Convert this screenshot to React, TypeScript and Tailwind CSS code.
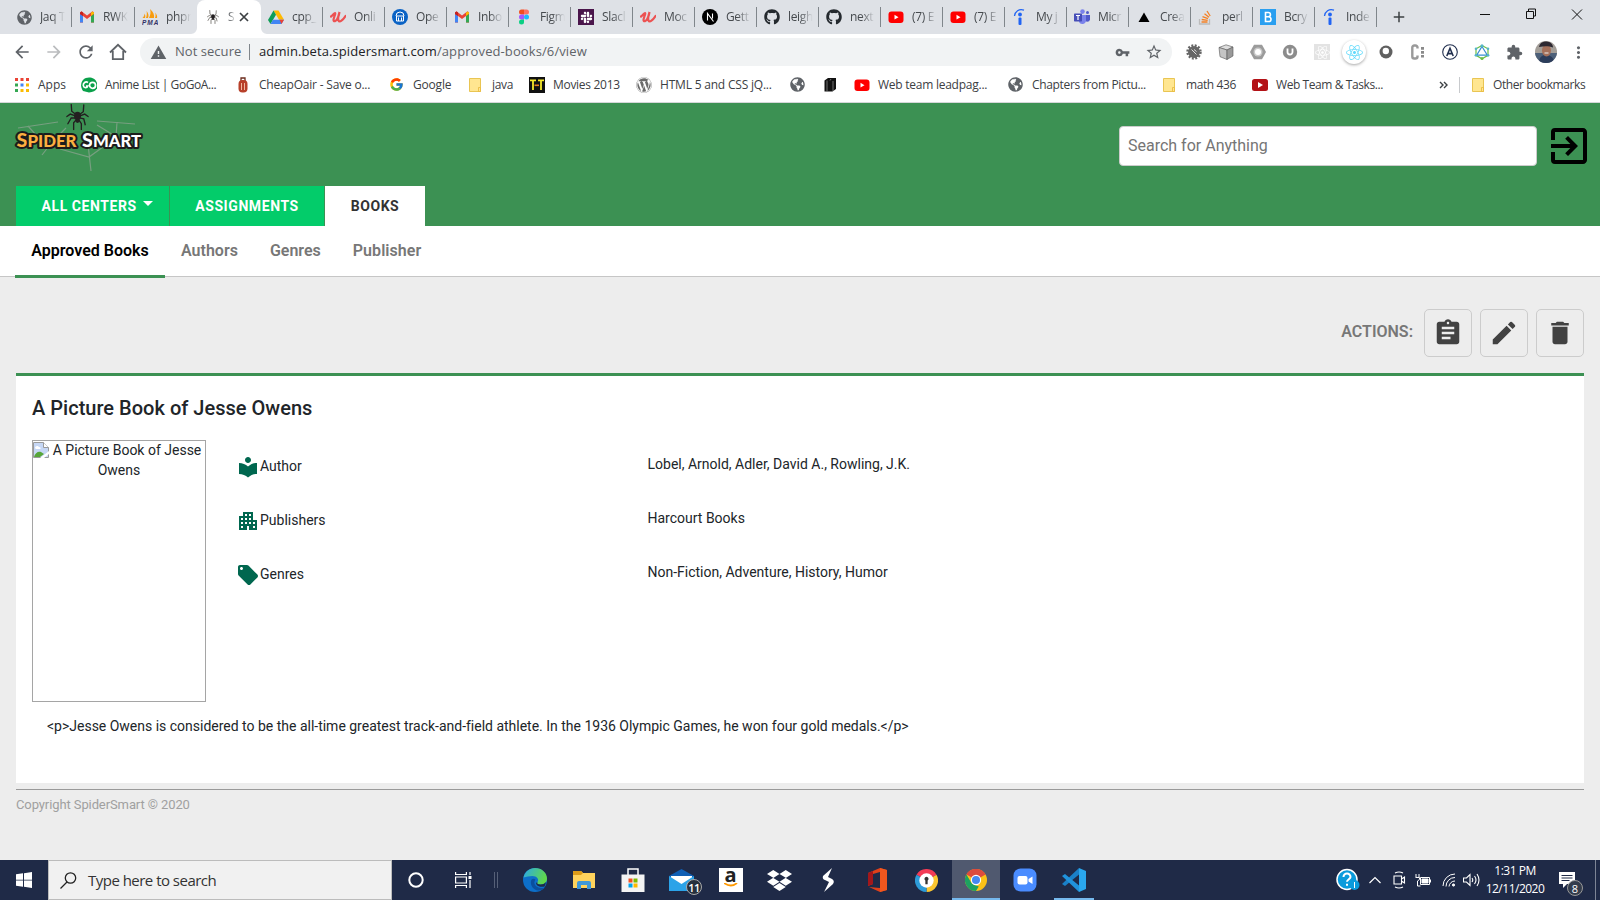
import React from "react";
import {
  MdApartment, MdArrowBack, MdArrowForward, MdAssignment, MdDelete, MdEdit, MdExitToApp, MdExtension,
  MdLocalLibrary, MdLocalOffer, MdMoreVert, MdStarBorder, MdVpnKey, MdWarning, MdRefresh, MdAdd,
} from "react-icons/md";
import { FaGithub, FaWordpress, FaDropbox, FaReact, FaGlobeAmericas, FaSlack } from "react-icons/fa";
import { FcGoogle } from "react-icons/fc";

type Kids = { children?: React.ReactNode };

const Svg = ({ children, box = "0 0 16 16", size = 16 }: Kids & { box?: string; size?: number }) => (
  <svg viewBox={box} width={size} height={size} className="shrink-0">{children}</svg>
);

const Globe = () => <FaGlobeAmericas size={15} color="#5f6368" className="shrink-0" />;
const Gmail = () => (
  <Svg>
    <path d="M1 3.5v10h3V7l4 3 4-3v6.500h3v-10L13.500 2.300 8 6.500 2.500 2.300z" fill="#ea4335" />
    <path d="M1 5v8.500h3V7z" fill="#4285f4" />
    <path d="M15 5v8.500h-3V7z" fill="#34a853" />
    <path d="M12 7l3-2.200V3.600L13.500 2.500 12 3.700z" fill="#fbbc04" />
    <path d="M1 3.500v1.500L4 7V3.600L2.500 2.500z" fill="#c5221f" />
  </Svg>
);
const Pma = () => (
  <Svg>
    <path d="M4 9c1-3 1-5 .5-7 2 2 2.500 5 1.500 7zM7 9c1.500-3 2-6 1-9 3.500 3 4.500 6 4 9zM13 9c.8-2 .8-4 0-5.500 2 2 2.500 4 2 5.500zM.5 9C2 7.500 2.500 6 2.500 4.500 3.500 6 3.500 7.500 3 9z" fill="#f89c0e" />
    <text x="0" y="15.500" fontSize="6.500" fontWeight="900" fontStyle="italic" fill="#333366" textLength="16" fontFamily="Liberation Sans">PMA</text>
  </Svg>
);
const Spider = ({ size = 14, thin = false }: { size?: number; thin?: boolean }) => (
  <Svg box="0 0 24 28" size={size}>
    <g fill="none" stroke={thin ? "#55504a" : "#231f20"} strokeWidth="1.400" strokeLinecap="round">
      <path d="M11 12L6 8 5.500 1M10.500 13L4.500 11 1 13.500M10.500 15l-5 0L2 21M11 16.500L8 20v7" />
      <path d="M13.500 12L18 8.500 18.500 1.500M14 13l5.500-2L23 13.500M14 15l4.500 1L20 22M13 16.500L16 21v6" />
    </g>
    <ellipse cx="12" cy="13" rx="3.600" ry="4.500" fill="#231f20" />
    <circle cx="12" cy="18" r="2.200" fill="#231f20" />
  </Svg>
);
const Drive = () => (
  <Svg>
    <path d="M5.500 1.500h5l5.500 9.300h-5z" fill="#ffba00" />
    <path d="M5.500 1.500L0 10.900 2.500 15 8 5.700z" fill="#0f9d58" />
    <path d="M5 10.800h11L13.500 15h-11z" fill="#4285f4" />
    <path d="M11.500 10.800H16L13.500 15z" fill="#ea4335" />
  </Svg>
);
const Udemy = () => (
  <Svg>
    <path d="M1 7.500C3 6 4 4 5 4S3.500 9 3.500 11s2.500 1.500 4-1.500S9.500 3 9.500 3 7.500 9 8.500 11.500s4.500-.5 7-4.500" fill="none" stroke="#ec5252" strokeWidth="2.200" strokeLinecap="round" />
  </Svg>
);
const OpenEdu = () => (
  <Svg>
    <circle cx="8" cy="8" r="8" fill="#0b63c5" />
    <path d="M4 7l1-3 3-1 3 1 1 3M4.500 7h7v5h-7zM6.500 8.500v3.500M9.500 8.500v3.500" fill="none" stroke="#fff" strokeWidth="1" />
  </Svg>
);
const Figma = () => (
  <Svg>
    <path d="M8 .5H5.500a2.500 2.500 0 000 5H8z" fill="#f24e1e" />
    <path d="M8 .5h2.500a2.500 2.500 0 010 5H8z" fill="#ff7262" />
    <path d="M8 5.500H5.500a2.500 2.500 0 000 5H8z" fill="#a259ff" />
    <circle cx="10.500" cy="8" r="2.500" fill="#1abcfe" />
    <path d="M8 10.500H5.500A2.500 2.500 0 108 13z" fill="#0acf83" />
  </Svg>
);
const Slack = () => (
  <span className="flex size-4 shrink-0 items-center justify-center bg-[#4a154b]"><FaSlack size={13} color="#fff" /></span>
);
const Next = () => (
  <Svg>
    <circle cx="8" cy="8" r="8" fill="#000" />
    <path d="M5.500 11.500v-7l6 8M10.500 4.500v5" fill="none" stroke="#fff" strokeWidth="1.100" />
  </Svg>
);
const Github = () => <FaGithub size={16} color="#24292e" className="shrink-0" />;
const YouTube = () => (
  <Svg>
    <rect x="0.500" y="2.500" width="15" height="11.500" rx="3" fill="#f00" />
    <path d="M6.500 5.800v4.800l4-2.400z" fill="#fff" />
  </Svg>
);
const Indeed = () => (
  <Svg>
    <circle cx="8" cy="5.500" r="1.900" fill="#2164f3" />
    <rect x="6.500" y="8.500" width="3" height="7.500" rx="1" fill="#2164f3" />
    <path d="M2.500 7C3 2.500 7-.5 12 1.200" fill="none" stroke="#2164f3" strokeWidth="1.300" />
  </Svg>
);
const Teams = () => (
  <Svg>
    <circle cx="8.500" cy="2.600" r="2.300" fill="#7b83eb" />
    <circle cx="13.500" cy="3.600" r="1.500" fill="#5059c9" />
    <path d="M10.500 6H16v4.500a2.800 2.800 0 01-5.500 0z" fill="#5059c9" />
    <path d="M5 6h7v5.500a3.700 3.700 0 01-7 1.500z" fill="#7b83eb" />
    <rect x="0" y="4.500" width="8" height="8" rx="0.700" fill="#464eb8" />
    <path d="M2 6.500h4M4 6.500v4.500" stroke="#fff" strokeWidth="1.200" />
  </Svg>
);
const Vercel = () => <Svg><path d="M8 3.500l5.500 9.500h-11z" /></Svg>;
const Stack = () => (
  <Svg>
    <path d="M1.500 10v5h10v-5" fill="none" stroke="#bcbbbb" strokeWidth="1.300" />
    <path d="M3.500 13h6M3.700 10.500l6 .8M4.500 7.700l5.500 2M6.500 4.700l4.500 3.600M9 2l3.200 5" stroke="#f48024" strokeWidth="1.300" />
  </Svg>
);
const Bold = () => (
  <Svg>
    <rect width="16" height="16" fill="#2a9ff0" />
    <path d="M5.500 3.500v9h3.200a2.300 2.300 0 000-4.700H5.500h2.800a2.100 2.100 0 000-4.300z" fill="none" stroke="#fff" strokeWidth="1.600" />
  </Svg>
);
const Folder = () => (
  <Svg box="0 0 12 14" size={14}>
    <path d="M.5.500h11v13H.5z" fill="#ffe690" stroke="#e9c553" />
    <path d="M9.500 9.500h2v4h-2z" fill="#ffe690" stroke="#e9b83a" strokeWidth=".8" />
  </Svg>
);

const tabs: { icon: React.ReactNode; label: string; w: string; active?: boolean }[] = [
  { icon: <Globe />, label: "Jaq T", w: "w-[63px]" },
  { icon: <Gmail />, label: "RWK", w: "w-[63px]" },
  { icon: <Pma />, label: "phpr", w: "w-[62px]" },
  { icon: <Spider />, label: "S", w: "w-[64px]", active: true },
  { icon: <Drive />, label: "cpp_", w: "w-[62px]" },
  { icon: <Udemy />, label: "Onli", w: "w-[62px]" },
  { icon: <OpenEdu />, label: "Ope", w: "w-[62px]" },
  { icon: <Gmail />, label: "Inbo", w: "w-[62px]" },
  { icon: <Figma />, label: "Figm", w: "w-[62px]" },
  { icon: <Slack />, label: "Slacl", w: "w-[62px]" },
  { icon: <Udemy />, label: "Moc", w: "w-[62px]" },
  { icon: <Next />, label: "Gett", w: "w-[62px]" },
  { icon: <Github />, label: "leigh", w: "w-[62px]" },
  { icon: <Github />, label: "next", w: "w-[62px]" },
  { icon: <YouTube />, label: "(7) E", w: "w-[62px]" },
  { icon: <YouTube />, label: "(7) E", w: "w-[62px]" },
  { icon: <Indeed />, label: "My j", w: "w-[62px]" },
  { icon: <Teams />, label: "Micr", w: "w-[62px]" },
  { icon: <Vercel />, label: "Crea", w: "w-[62px]" },
  { icon: <Stack />, label: "perl", w: "w-[62px]" },
  { icon: <Bold />, label: "Bcry", w: "w-[62px]" },
  { icon: <Indeed />, label: "Inde", w: "w-[62px]" },
];

const TabStrip = () => (
  <div className="flex h-[34px] bg-[#dee1e6] pl-[9px] text-[12px] tracking-[-0.35px] text-[#45494d]">
    {tabs.map((t, i) =>
      t.active ? (
        <div key={i} className="relative flex w-[64px] shrink-0 items-center rounded-t-[8px] bg-white pl-[9px]">
          <svg className="absolute bottom-0 -left-[6px]" width="6" height="6"><path d="M6 0v6H0A6 6 0 006 0z" fill="#fff" /></svg>
          <svg className="absolute -right-[6px] bottom-0" width="6" height="6"><path d="M0 0v6h6A6 6 0 010 0z" fill="#fff" /></svg>
          <Spider size={14} thin />
          <span className="ml-2 w-[8px] overflow-hidden [mask-image:linear-gradient(to_right,black,transparent)]">{t.label}</span>
          <svg width="10" height="10" className="ml-[3px] shrink-0" stroke="#3c4043" strokeWidth="1.700"><path d="M1 1l8 8M9 1L1 9" /></svg>
        </div>
      ) : (
        <div key={i} className={`${t.w} flex shrink-0 items-center pl-[7px]`}>
          <span className="flex w-4 shrink-0 justify-center">{t.icon}</span>
          <span className="ml-2 w-[25px] overflow-hidden whitespace-nowrap [mask-image:linear-gradient(to_right,black_45%,transparent)]">{t.label}</span>
          <span className={`ml-auto h-5 w-px ${i === 2 ? "" : "bg-[#80868b]"}`} />
        </div>
      ),
    )}
    <div className="flex w-[44px] items-center justify-center"><MdAdd size={18} className="text-[#3c4043]" /></div>
    <svg className="ml-auto mr-[17px]" width="104" height="34" fill="none" stroke="#111" strokeWidth="1">
      <path d="M1 14.500h10M47.500 11.500h7v7h-7zM49.500 11v-2h7v7h-2M93 9.500l10 10M103 9.500l-10 10" />
    </svg>
  </div>
);

const Ext = ({ children }: Kids) => <span className="flex w-8 shrink-0 items-center justify-center">{children}</span>;

const Toolbar = () => (
  <div className="flex h-[36px] items-center bg-white text-[#5f6368]">
    <div className="flex w-[140px] items-center pl-[12px]">
      <MdArrowBack size={20} /><MdArrowForward size={20} className="ml-3 text-[#babcbe]" />
      <MdRefresh size={20} className="ml-3" />
      <svg width="20" height="20" viewBox="0 0 20 20" className="ml-3" fill="none" stroke="currentColor" strokeWidth="1.800"><path d="M2 10.500L10 2.800l8 7.700M4.800 9v8.200h10.400V9" /></svg>
    </div>
    <div className="flex h-[28px] w-[1032px] items-center rounded-full bg-[#f1f3f4] pl-[10px] pr-[9px]">
      <MdWarning size={17} />
      <span className="ml-2 w-[67px] whitespace-nowrap text-[13px] tracking-[0.04px]">Not secure</span>
      <span className="ml-[7px] h-4 w-px bg-[#80868b]" />
      <span className="ml-[9px] whitespace-nowrap text-[13px] tracking-[0.1px]"><span className="text-[#202124]">admin.beta.spidersmart.com</span>/approved-books/6/view</span>
      <MdVpnKey size={15} className="ml-auto" /><MdStarBorder size={18} className="ml-[15px]" />
    </div>
    <div className="ml-[6px] flex items-center">
      <Ext><Svg><circle cx="8" cy="8" r="6.500" fill="none" stroke="#666" strokeWidth="2.400" strokeDasharray="1.900 1.500" /><circle cx="8" cy="8" r="6" fill="#666" /><path d="M5.500 5.500l5 5M8 5.500l2.500 2" stroke="#ddd" strokeWidth="1" /></Svg></Ext>
      <Ext><Svg><path d="M1 3.500L8 .8l7 2.200-6 3z" fill="#ddd" stroke="#555" strokeWidth=".6" /><path d="M1 3.500L9 6v9.500l-7-2.800z" fill="#c4c4c4" stroke="#555" strokeWidth=".6" /><path d="M9 6l6-3v9l-6 3.500z" fill="#999" stroke="#555" strokeWidth=".6" /></Svg></Ext>
      <Ext><Svg><path d="M4 .8h8L16 8l-4 7.200H4L0 8z" fill="#9b9b9b" /><circle cx="8" cy="8" r="4.500" fill="#c9c9c9" /><circle cx="8" cy="8" r="3" fill="#fff" /></Svg></Ext>
      <Ext><Svg><circle cx="8" cy="8" r="7.200" fill="#8c8c8c" /><path d="M5.500 4.500V8a2.500 2.500 0 005 0V4.500" stroke="#fff" strokeWidth="1.800" fill="none" /></Svg></Ext>
      <Ext><span className="flex size-4 items-center justify-center bg-[#e3e3e3]"><FaReact size={15} color="#fff" /></span></Ext>
      <Ext><span className="flex size-6 shrink-0 items-center justify-center rounded-full bg-white shadow-[0_1px_3px_rgba(0,0,0,0.35)]"><FaReact size={17} color="#61dafb" /></span></Ext>
      <Ext><Svg><circle cx="8" cy="8" r="6.500" fill="#606060" /><circle cx="7.800" cy="7" r="3.200" fill="#fff" /></Svg></Ext>
      <Ext><Svg><path d="M7.500 4.500V3.500a2 2 0 00-2-2H4.300a2 2 0 00-2 2v9a2 2 0 002 2h1.200a2 2 0 002-2v-1" stroke="#9a9a9a" strokeWidth="2.400" fill="none" /><path d="M12.500 3v10.500" stroke="#8a8a8a" strokeWidth="3" strokeDasharray="2.800 1.200" /></Svg></Ext>
      <Ext><Svg><circle cx="8" cy="8" r="7.300" fill="none" stroke="#22304f" strokeWidth="1.100" /><path d="M4.800 12L8 4.300l3.200 7.700M6.300 9.600h3.500" fill="none" stroke="#22304f" strokeWidth="1.600" /></Svg></Ext>
      <Ext><Svg><path d="M8 1.500l6 3.300v6.500L8 14.700l-6-3.400V4.800z" fill="none" stroke="#6bbf45" strokeWidth="1.200" /><path d="M8 2.500l5.300 8.700H2.700z" fill="none" stroke="#3b8fd0" strokeWidth="1.200" /><g fill="#55b4c9"><circle cx="8" cy="1.700" r="1.500" /><circle cx="14" cy="4.800" r="1.300" /><circle cx="14" cy="11.300" r="1.400" /><circle cx="2" cy="4.800" r="1.300" /><circle cx="2" cy="11.300" r="1.400" /></g><circle cx="8" cy="14.500" r="1.500" fill="#6bbf45" /></Svg></Ext>
      <Ext><MdExtension size={17} /></Ext>
      <Ext>
        <svg width="22" height="22" viewBox="0 0 22 22">
          <defs><clipPath id="av"><circle cx="11" cy="11" r="11" /></clipPath></defs>
          <g clipPath="url(#av)"><rect width="22" height="22" fill="#a39e98" /><rect y="12" width="22" height="10" fill="#4d6079" /><path d="M4 22c0-7 4-8 7-8s8 1 8 8z" fill="#2c3d5b" /><ellipse cx="11.500" cy="9.500" rx="4.500" ry="6" fill="#a5705a" /><path d="M4 6c1-5 5-6 8-5.500s6 2 6 6c-4-1.500-8-1.800-14-.5z" fill="#2d2831" /><path d="M9.500 12h4" stroke="#eee" /></g>
        </svg>
      </Ext>
      <Ext><MdMoreVert size={19} /></Ext>
    </div>
  </div>
);

const bookmarks: { icon: React.ReactNode; label: string; w: string; gap: string }[] = [
  { icon: <Svg size={14} box="0 0 14 14"><g><path d="M0 0h3v3H0zM5.500 0h3v3h-3zM11 0h3v3h-3z" fill="#ea4335" /><path d="M0 5.500h3v3H0zM0 11h3v3H0z" fill="#34a853" /><path d="M5.500 5.500h3v3h-3z" fill="#4285f4" /><path d="M11 5.500h3v3h-3zM5.500 11h3v3h-3zM11 11h3v3h-3z" fill="#fbbc04" /></g></Svg>, label: "Apps", w: "w-[66px]", gap: "w-[23px]" },
  { icon: <Svg><path d="M2 3C6-1 14 0 16 6s-2 9-8 9.500L2 14C-1 10 0 5 2 3z" fill="#0aa04a" /><path d="M7 5.500C4.500 4 2 6 2.300 8.500S6 11.500 6.700 9H5M11.500 5.300a3 3 0 10.100 6 3 3 0 00-.1-6z" fill="none" stroke="#fff" strokeWidth="1.700" /></Svg>, label: "Anime List | GoGoA...", w: "w-[154px] tracking-[-0.42px]", gap: "w-[24px]" },
  { icon: <Svg><path d="M6 4V1h4v3" fill="none" stroke="#6b2b1d" strokeWidth="1.300" /><rect x="3.500" y="3" width="9" height="12.500" rx="4" fill="#b8402a" /><path d="M6.500 6v7M9.500 6v7" stroke="#f0b8a0" strokeWidth="1" /></Svg>, label: "CheapOair - Save o...", w: "w-[154px] tracking-[-0.2px]", gap: "w-[24px]" },
  { icon: <FcGoogle size={15} className="shrink-0" />, label: "Google", w: "w-[79px] tracking-[-0.2px]", gap: "w-[24px]" },
  { icon: <Folder />, label: "java", w: "w-[61px] tracking-[-0.3px]", gap: "w-[24px]" },
  { icon: <Svg><rect width="16" height="16" fill="#111" /><path d="M1 3.300h6M4 3v10M9 3.300h6M12 3v10" stroke="#f7e92a" strokeWidth="1.800" /><path d="M5.500 8.300h4.500" stroke="#e67e22" strokeWidth="1.600" /></Svg>, label: "Movies 2013", w: "w-[107px] tracking-[-0.3px]", gap: "w-[24px]" },
  { icon: <FaWordpress size={16} color="#6b6b6b" className="shrink-0" />, label: "HTML 5 and CSS jQ...", w: "w-[154px] tracking-[-0.2px]", gap: "w-[24px]" },
  { icon: <Globe />, label: "", w: "w-[32px]", gap: "w-4" },
  { icon: <Svg><path d="M2.500 3.500L6 1h8v11l-3.500 2.500h-8z" fill="#111" /><path d="M5 3.500v11M8 3.500L9 2M11 4v10" stroke="#999" strokeWidth=".7" /></Svg>, label: "", w: "w-[32px]", gap: "w-4" },
  { icon: <YouTube />, label: "Web team leadpag...", w: "w-[154px] tracking-[-0.25px]", gap: "w-[24px]" },
  { icon: <Globe />, label: "Chapters from Pictu...", w: "w-[154px] tracking-[-0.33px]", gap: "w-[24px]" },
  { icon: <Folder />, label: "math 436", w: "w-[90px] tracking-[-0.4px]", gap: "w-[24px]" },
  { icon: <Svg><rect y="2" width="16" height="12" rx="2.500" fill="#b31217" /><path d="M6 5v6l5-3z" fill="#fff" /></Svg>, label: "Web Team & Tasks...", w: "w-[150px] tracking-[-0.42px]", gap: "w-[24px]" },
];

const BookmarkBar = () => (
  <div className="flex h-[32px] items-center bg-white pb-[3px] pl-[15px] text-[12px] text-[#3c4043]">
    {bookmarks.map((b, i) => (
      <div key={i} className={`${b.w} flex shrink-0 items-center whitespace-nowrap`}>
        <span className={`${b.gap} flex shrink-0`}>{b.icon}</span>{b.label}
      </div>
    ))}
    <svg width="10" height="10" className="ml-auto mr-[10px] shrink-0" fill="none" stroke="#3c4043" strokeWidth="1.400"><path d="M1 2l3 3-3 3M5 2l3 3-3 3" /></svg>
    <span className="h-4 w-px bg-[#c8cacd]" />
    <span className="ml-[11px] mr-2 shrink-0"><Folder /></span>
    <span className="w-[107px] whitespace-nowrap tracking-[-0.42px]">Other bookmarks</span>
  </div>
);

const Logo = () => (
  <svg width="144" height="76" viewBox="0 0 144 76" className="-mt-[2px] shrink-0">
    <g fill="none" stroke="#779f80" strokeWidth="1.200">
      <path d="M10 27l40-6M20 25l8 9M58 27l-9 9M41 45l-7 9M52 48l29 8 14-10M80 43l3 27M89 20l38 3M109 21l-1 15M89 24l18 11" />
    </g>
    <g transform="translate(56 2.500)"><Spider size={27} /></g>
    <g fontFamily="Lato" fontWeight="900" stroke="#1c1c1c" strokeWidth="4" paintOrder="stroke" strokeLinejoin="round">
      <text y="45.500" x="8.500" fill="#fbb040" fontSize="19" textLength="60" lengthAdjust="spacingAndGlyphs">S<tspan fontSize="16">PIDER</tspan></text>
      <text y="45.500" x="74" fill="#fff" fontSize="19" textLength="59" lengthAdjust="spacingAndGlyphs">S<tspan fontSize="16">MART</tspan></text>
    </g>
  </svg>
);

const Header = () => (
  <header className="flex h-[123px] flex-col bg-[#3c9153] px-4">
    <div className="-ml-2 flex h-[83px] items-start">
      <Logo />
      <div className="ml-auto mt-[23px] flex h-10 w-[418px] items-center rounded-[4px] border border-[#ccc] bg-white px-2 text-[16px] text-[#757575]">Search for Anything</div>
      <MdExitToApp size={48} className="-mr-[9px] ml-2 mt-[19px] text-black" />
    </div>
    <nav className="flex h-10 text-[14px] font-bold tracking-[0.58px] text-white">
      <div className="flex w-[153px] items-center bg-[#03cc6a] pl-[25.500px]">ALL CENTERS
        <svg width="10" height="5" className="mb-[5px] ml-[6px]"><path d="M0 0h10L5 5z" fill="#fff" /></svg>
      </div>
      <div className="ml-px flex w-[154px] items-center justify-center bg-[#03cc6a]">ASSIGNMENTS</div>
      <div className="ml-px flex w-[100px] items-center justify-center bg-white text-[#333]">BOOKS</div>
    </nav>
  </header>
);

const SubNav = () => (
  <nav className="flex h-[51px] border-b border-[#c6c6c6] bg-white pl-[15px] text-[16px] font-semibold text-[#777]">
    <div className="flex h-[52px] w-[150px] items-center justify-center border-b-[3px] border-[#3c9153] text-black">Approved Books</div>
    <div className="flex h-[49px] items-center pl-4">Authors</div>
    <div className="flex h-[49px] items-center pl-8">Genres</div>
    <div className="flex h-[49px] items-center pl-8 tracking-[0.05px]">Publisher</div>
  </nav>
);

const Action = ({ children }: Kids) => (
  <div className="ml-2 flex size-12 items-center justify-center rounded-[5px] border border-[#ccc] text-[#424242]">{children}</div>
);

const rows = [
  { icon: <MdLocalLibrary size={24} />, label: "Author", value: "Lobel, Arnold, Adler, David A., Rowling, J.K." },
  { icon: <MdApartment size={24} />, label: "Publishers", value: "Harcourt Books" },
  { icon: <MdLocalOffer size={24} />, label: "Genres", value: "Non-Fiction, Adventure, History, Humor" },
];

const Main = () => (
  <main className="h-[583px] bg-[#ededed] px-4 pt-8">
    <div className="flex h-[64px] items-start justify-end">
      <span className="mr-[3px] mt-[11px] text-[16px] font-semibold leading-6 text-[#777]">ACTIONS:</span>
      <Action><MdAssignment size={30} /></Action>
      <Action><MdEdit size={30} /></Action>
      <Action><MdDelete size={30} /></Action>
    </div>
    <section className="h-[410px] border-t-[3px] border-[#3c9153] bg-white px-4 text-[14px] text-[#212529]">
      <h1 className="h-[64px] pt-[17px] text-[20px] font-medium leading-[30px] tracking-[0.02px]">A Picture Book of Jesse Owens</h1>
      <div className="flex">
        <div className="h-[262px] w-[174px] border border-[#a5a5a5] text-center leading-5">
          <div className="-mt-px">
            <svg width="16" height="16" className="-ml-1 mr-1 inline-block align-[-3px]"><path d="M.5.500h10l5 5v10H.5z" fill="#c6d7f5" stroke="#9a9a9a" /><path d="M10.500.500v5h5" fill="#fff" stroke="#9a9a9a" /><path d="M1 15c1-4 4-6 7-5l3 2-4 3z" fill="#57a639" /><path d="M2 6c0-2 3-3 4-1 2 0 2 2 1 2H3z" fill="#fff" /><path d="M7 16l9-7v3l-5 4z" fill="#fff" /></svg>
            A Picture Book of Jesse Owens
          </div>
        </div>
        <div className="ml-[30px] pt-[15px]">
          {rows.map((r) => (
            <div key={r.label} className="flex h-[54px] items-start">
              <span className="flex w-[411.500px] items-center text-[#00674f]">{r.icon}<span className="-mt-px text-[#212529]">{r.label}</span></span>
              <span className="-mt-px leading-5">{r.value}</span>
            </div>
          ))}
        </div>
      </div>
      <p className="pl-[15px] pt-[14px] leading-5 tracking-[-0.007px]">&lt;p&gt;Jesse Owens is considered to be the all-time greatest track-and-field athlete. In the 1936 Olympic Games, he won four gold medals.&lt;/p&gt;</p>
    </section>
    <footer className="mt-[6px] border-t border-[#999] pt-[5px] text-[13px] leading-5 tracking-[-0.1px] text-[#a0a0a0]">Copyright SpiderSmart © 2020</footer>
  </main>
);

const apps: React.ReactNode[] = [
  <svg width="24" height="24" viewBox="0 0 24 24"><defs><linearGradient id="ed" x1="0" y1="0" x2="1" y2="0.300"><stop offset="0" stopColor="#2aa8ea" /><stop offset="1" stopColor="#5fd84c" /></linearGradient></defs><circle cx="12" cy="12" r="12" fill="#0d6fc9" /><path d="M.5 9.500C2 3.500 6.500 0 12 0c7 0 12 5 12 10.500 0 4-3 6-6.500 6-3 0-4-1-3-2.500 2-3-1-6-5-6-3.500 0-6 1-9 1.500z" fill="url(#ed)" /><path d="M8 13c-1 5 3 9 7 9.500 3 .2 5-1 7-3-3 1-9 1-10.500-4-.5-2 .5-3 1-4-2-1.500-4-.5-4.500 1.500z" fill="#0b4f9e" /><path d="M14.500 14c-1 1.500 0 2.500 3 2.500 2 0 4.300-.8 5.500-2.500-.5 2-1 3.500-1.500 4.500-3 1-8 0-8.500-3.500z" fill="#1e2b49" /></svg>,
  <svg width="22" height="20"><path d="M0 1h8l2 2h12v15H0z" fill="#ffd35c" /><path d="M0 1h8l2 2-2 2H0z" fill="#dd9c18" /><path d="M4 19v-6q0-2 2-2h10q2 0 2 2v6h-4v-4H8v4z" fill="#3f98d8" /></svg>,
  <svg width="24" height="24"><path d="M7 7V1h10v6" fill="none" stroke="#fff" strokeWidth="1.500" /><path d="M.5 6.500h23V24H.5z" fill="#f4f4f4" /><path d="M7.500 10.500h4v4h-4z" fill="#f25022" /><path d="M12.500 10.500h4v4h-4z" fill="#7fba00" /><path d="M7.500 15.500h4v4h-4z" fill="#00a4ef" /><path d="M12.500 15.500h4v4h-4z" fill="#ffb900" /></svg>,
  <span className="relative"><svg width="25" height="24"><path d="M0 8l12.500-7L25 8v15H0z" fill="#0f5fb5" /><path d="M2 8h21v8H2z" fill="#fff" /><path d="M0 8l12.500 8L25 8v15H0z" fill="#2ba3e8" /></svg><span className="absolute -right-[8px] -bottom-[3px] flex size-4 items-center justify-center rounded-full border border-[#aaa] bg-[#26303d] text-[11px] font-semibold leading-none tracking-[-0.5px] text-white">11</span></span>,
  <span className="flex size-6 flex-col items-center justify-center bg-white"><span className="-mt-[6px] font-['Open_Sans'] text-[20px] font-bold leading-[18px] text-[#222]">a</span><svg width="14" height="5" className="-mt-px"><path d="M0 0q7 5 13 0" fill="none" stroke="#f90" strokeWidth="1.800" /></svg></span>,
  <FaDropbox size={25} color="#fff" />,
  <svg width="14" height="24"><path d="M10 0L1 8q-1 3 2 4l4 2-5 10 9-8q2-3-1-5L6 9z" fill="#fff" /></svg>,
  <svg width="20" height="24"><path d="M0 5L12 0l7 2v20l-7 2L1 19l11 1V4L5 6v10l-5 2z" fill="#e0401a" /><path d="M0 5l5-2v13l-5 2z" fill="#a3171b" /><path d="M12 0l7 2v20l-7 2z" fill="#f2571e" /></svg>,
  <svg width="23" height="23" viewBox="0 0 24 24"><path d="M12 12L1.600 6a12 12 0 0120.800 0z" fill="#f33b55" /><path d="M12 12l10.400-6a12 12 0 01-10.400 18z" fill="#fbc62f" /><path d="M12 12v12A12 12 0 011.600 6z" fill="#2d9bd8" /><circle cx="12" cy="12" r="7.500" fill="#fff" /><path d="M12 8a2.200 2.200 0 00-1.200 4v4h2.400v-4A2.200 2.200 0 0012 8z" fill="#333" /></svg>,
  <svg width="22" height="22" viewBox="0 0 24 24"><circle cx="12" cy="12" r="12" fill="#fbc116" /><path d="M12 12L1.600 6a12 12 0 0120.800 0z" fill="#dd4b3e" /><path d="M12 24A12 12 0 011.600 6L7.200 15.500 12 18l3 1z" fill="#1da261" /><path d="M1.600 6A12 12 0 0112 0h0a12 12 0 0110.400 6.500H12z" fill="#dd4b3e" /><circle cx="12" cy="12" r="5.600" fill="#fff" /><circle cx="12" cy="12" r="4.400" fill="#4688f1" /></svg>,
  <svg width="24" height="24"><rect x=".5" y=".5" width="23" height="23" rx="7" fill="#4a8cff" /><rect x="4.500" y="8" width="10" height="8.500" rx="2" fill="#fff" /><path d="M15.500 11l4-2.500v7.500l-4-2.500z" fill="#fff" /></svg>,
  <svg width="24" height="24"><path d="M17 0l7 3v18l-7 3z" fill="#2aa7ee" /><path d="M17 0v6.500L3 18 0 16z" fill="#1a80c8" /><path d="M17 24v-6.500L3 6 0 8z" fill="#2093dc" /></svg>,
];

const slot = (i: number) => {
  if (i === 9) return "ml-px w-12 border-b-2 border-[#76b9ed] bg-[#50596f] pt-0.5";
  if (i === 11) return "ml-[5px] w-10 border-b-2 border-[#76b9ed] pt-0.5";
  return "w-[49px]";
};

const Taskbar = () => (
  <div className="flex h-10 items-stretch bg-[#1f2a47] text-white">
    <div className="flex w-12 items-center justify-center">
      <svg width="16" height="16"><path d="M0 2.300L7 1.300v6.400H0zM8 1.200L16 0v7.700H8zM0 8.600h7v6.200l-7-1zM8 8.600h8V16l-8-1.200z" fill="#fff" /></svg>
    </div>
    <div className="flex w-[344px] items-center border border-[#bcbcbc] bg-[#f1f1f1] pl-[11px] text-[15px] text-[#333]">
      <svg width="17" height="17" fill="none" stroke="#222" strokeWidth="1.300"><circle cx="10.500" cy="6" r="5.200" /><path d="M7 10L.5 16.500" /></svg>
      <span className="ml-[11px] whitespace-nowrap tracking-[-0.52px]">Type here to search</span>
    </div>
    <div className="flex w-[48px] items-center pl-4"><svg width="16" height="16"><circle cx="8" cy="8" r="6.700" fill="none" stroke="#fff" strokeWidth="2" /></svg></div>
    <div className="flex w-[70px] items-center pl-[15px]">
      <svg width="17" height="16" fill="none" stroke="#fff" strokeWidth="1.200"><path d="M.6 0v2.500h10.800V0M.6 5h10.800v6H.6zM.6 16v-2.500h10.800V16M15 0v3M15 8v8" /><path d="M13.500 4h3v3h-3z" fill="#fff" stroke="none" /></svg>
      <svg width="5" height="16" className="ml-[22px]" stroke="#566078"><path d="M.5 0v16M3.500 0v16" /></svg>
    </div>
    {apps.map((a, i) => (
      <div key={i} className={`flex shrink-0 items-center justify-center ${slot(i)}`}>{a}</div>
    ))}
    <div className="ml-auto flex items-center">
      <svg width="24" height="24"><circle cx="11" cy="11.500" r="10" fill="#0a9bdc" stroke="#fff" strokeWidth="1.500" /><path d="M7.500 9a3.500 3.500 0 117 0c0 2-3.500 2.500-3.500 4.800M11 15.800v2" fill="none" stroke="#fff" strokeWidth="2" /><circle cx="18.500" cy="17" r="5" fill="#0a9bdc" /><path d="M18.500 14v6" stroke="#fff" /></svg>
      <svg width="12" height="8" className="ml-[9px]" fill="none" stroke="#fff" strokeWidth="1.200"><path d="M.5 7L6 1.500 11.500 7" /></svg>
      <svg width="13" height="18" className="ml-[12px]" fill="none" stroke="#fff" strokeWidth="1.100"><path d="M2 2q4-2 8 0M2 16q4 2 8 0M1 5h7.500v8H1zM8.500 8l3-2v6l-3-2" /></svg>
      <svg width="17" height="13" className="ml-[9px]" fill="none" stroke="#fff"><path d="M5.500 3.500h9v7h-9zM15.500 5.500v3M1 0v3M4 0v3M.5 3.500h4v2l-2 1.500v5h3" /><path d="M7 5h6v4H7z" fill="#fff" /></svg>
      <svg width="14" height="14" className="ml-[10px]" fill="none" stroke="#fff" strokeWidth="1"><path d="M1 13A12 12 0 0113 1M4 13.500A9 9 0 0113 4.500M7 13.500a6 6 0 016-5.500" /><circle cx="11.500" cy="12" r="1.100" fill="#fff" /></svg>
      <svg width="17" height="14" className="ml-[7px]" fill="none" stroke="#fff" strokeWidth="1.100"><path d="M.5 5h3l3.500-3.500v11L3.500 9h-3zM9 5q1.500 2 0 4M11.500 3q3 4 0 8M14 1q4 6 0 12" /></svg>
      <div className="ml-[3px] flex w-[64px] flex-col items-center whitespace-nowrap text-[12px] leading-[18px] tracking-[-0.5px]"><span>1:31 PM</span><span>12/11/2020</span></div>
      <div className="relative ml-[12px] h-[18px] w-4">
        <svg width="16" height="18"><path d="M0 1h16v12H8l-4 4v-4H0z" fill="#fff" /><path d="M2.500 4.500h11M2.500 7h11M2.500 9.500h8" stroke="#1f2a47" /></svg>
        <span className="absolute -right-[8px] -bottom-[7px] flex size-4 items-center justify-center rounded-full border border-[#999] bg-[#333c4b] text-[11px] leading-none">8</span>
      </div>
      <span className="ml-5 mr-1 h-10 w-px bg-[#7d8495]" />
    </div>
  </div>
);

export default function App() {
  return (
    <div className="h-[900px] w-[1600px] overflow-hidden font-['Open_Sans',sans-serif]">
      <TabStrip />
      <Toolbar />
      <BookmarkBar />
      <div className="h-px bg-[#d5d7d9]" />
      <div className="font-['Roboto',sans-serif]">
        <Header />
        <SubNav />
        <Main />
      </div>
      <Taskbar />
    </div>
  );
}
